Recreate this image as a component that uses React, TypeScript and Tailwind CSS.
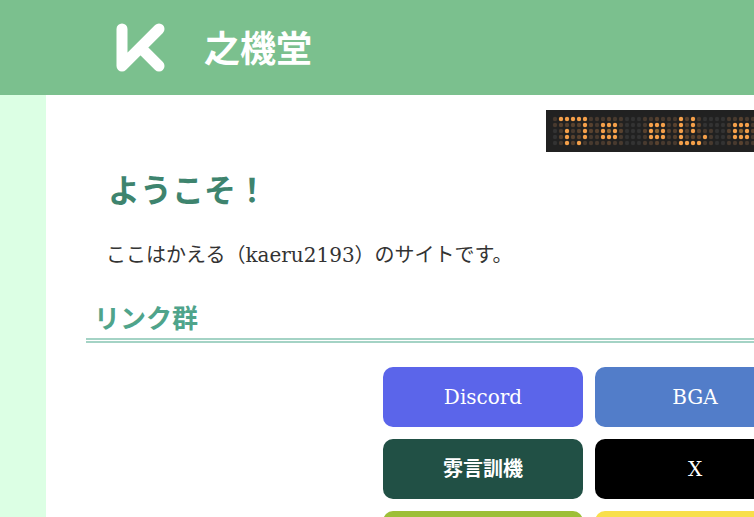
const LIT: Record<number, number[]> = {
  0: [1, 2, 3, 4, 5, 21, 23],
  1: [5, 8, 9, 10, 16, 17, 18, 21, 23, 30, 31, 32],
  2: [2, 5, 8, 10, 16, 18, 21, 23, 30, 32],
  3: [2, 5, 8, 9, 10, 16, 17, 18, 21, 25, 30, 31, 32],
  4: [2, 4, 21, 22, 23, 24],
};

const COLUMNS = 60;
const ROWS = 5;

const isLit = (row: number, col: number) => LIT[row]?.includes(col) ?? false;

// Unlit lamps pick up some of the light of the lamps around them
function lampColor(row: number, col: number) {
  if (isLit(row, col)) return "#f5a04a";
  let glow = 0;
  for (let r = row - 1; r <= row + 1; r++) {
    for (let c = col - 1; c <= col + 1; c++) {
      if (isLit(r, c)) glow += 1;
    }
  }
  if (glow >= 7) return "#8e6431";
  if (glow >= 3) return "#59422f";
  if (glow >= 1) return "#483a2f";
  return "#333333";
}

function LedBoard() {
  const lamps = [];
  for (let row = 0; row < ROWS; row++) {
    for (let col = 0; col < COLUMNS; col++) {
      lamps.push(
        <circle key={`${row}-${col}`} cx={9 + col * 6} cy={9 + row * 6} r={2.2} fill={lampColor(row, col)} />
      );
    }
  }
  return (
    <div className="h-[42px] w-[376px] shrink-0 overflow-hidden bg-[#212121]">
      <svg width="376" height="42" viewBox="0 0 376 42" role="img" aria-label="電光掲示板">
        {lamps}
      </svg>
    </div>
  );
}

const links = [
  { label: "Discord", color: "bg-[#5b65ea]", weight: "font-normal" },
  { label: "BGA", color: "bg-[#527dc9]", weight: "font-normal" },
  { label: "雰言訓機", color: "bg-[#215045]", weight: "font-bold" },
  { label: "X", color: "bg-black", weight: "font-normal" },
  { label: "", color: "bg-[#9dbf38]", weight: "font-normal" },
  { label: "", color: "bg-[#f8df4b]", weight: "font-normal" },
];

export default function App() {
  return (
    <div className="min-h-screen overflow-hidden bg-[#dcffe4] font-['DejaVu_Serif','Noto_Sans_CJK_JP',serif] text-[#333333]">
      <header className="flex h-[95px] items-center gap-9 bg-[#7bc08e] pl-[113px] font-['Noto_Sans_CJK_JP',sans-serif] text-white">
        <svg width="55" height="55" viewBox="0 0 55 55" fill="none" stroke="currentColor" strokeWidth="11" strokeLinecap="round" strokeLinejoin="round" aria-hidden="true">
          <path d="M9 9v37L46 9M27.500 27.500L46 46" />
        </svg>
        <p className="pb-1 text-4xl font-bold">之機堂</p>
      </header>

      <main className="ml-[46px] min-h-[422px] bg-white pt-[15px] pl-10">
        <div className="flex pl-[460px]">
          <LedBoard />
        </div>
        <h1 className="mt-3 pl-[22px] font-['Noto_Sans_CJK_JP',sans-serif] text-[32px] leading-[48px] font-bold text-[#3e846e]">
          ようこそ！
        </h1>
        <p className="mt-[25px] pl-5 text-xl leading-9">ここはかえる（kaeru2193）のサイトです。</p>
        <h2 className="mt-[23px] border-b-5 border-double border-[#a4d3c5] pl-2 font-['Noto_Sans_CJK_JP',sans-serif] text-[26px] leading-[42px] font-bold text-[#4fa48b]">
          リンク群
        </h2>
        <nav className="mt-6 grid grid-cols-[200px_200px] gap-3 pl-[297px]">
          {links.map((link) => (
            <a
              key={link.color}
              href="#"
              className={`flex h-[60px] items-center justify-center rounded-[10px] text-xl text-white ${link.color} ${link.weight}`}
            >
              {link.label}
            </a>
          ))}
        </nav>
      </main>
    </div>
  );
}
